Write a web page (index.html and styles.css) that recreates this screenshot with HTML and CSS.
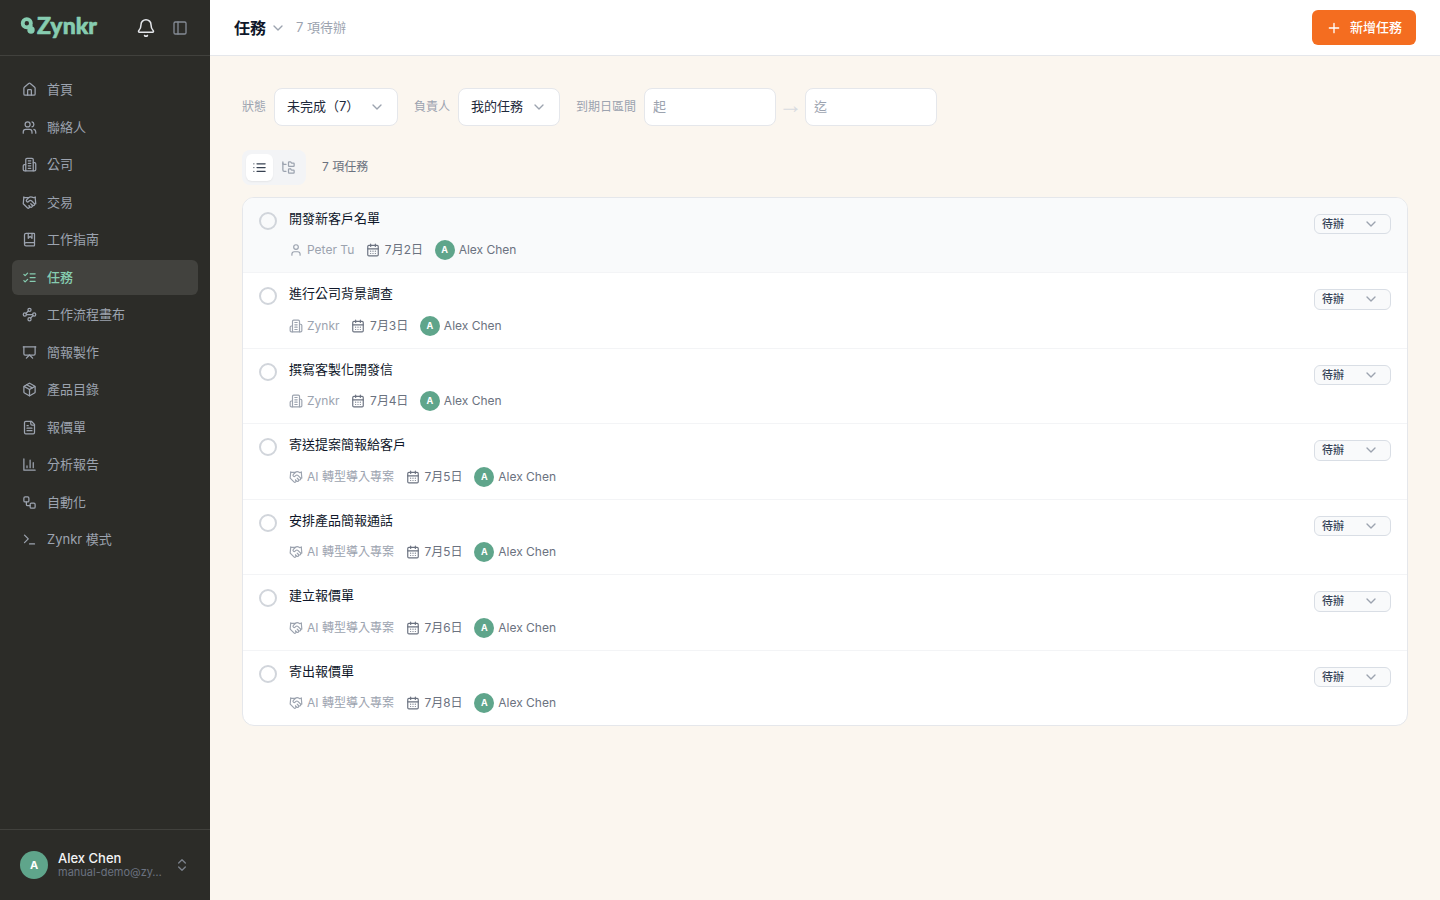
FILE: index.html
```html
<!DOCTYPE html>
<html lang="zh-Hant">
<head>
<meta charset="UTF-8">
<meta name="viewport" content="width=device-width, initial-scale=1.0">
<title>任務 - Zynkr</title>
<link rel="stylesheet" href="styles.css">
</head>
<body>
    <!-- Icons -->
    <svg class="sprite" xmlns="http://www.w3.org/2000/svg">
        <symbol id="home" viewBox="0 0 24 24"><path d="M15 21v-8a1 1 0 0 0-1-1h-4a1 1 0 0 0-1 1v8"/><path d="M3 10a2 2 0 0 1 .709-1.528l7-5.999a2 2 0 0 1 2.582 0l7 5.999A2 2 0 0 1 21 10v9a2 2 0 0 1-2 2H5a2 2 0 0 1-2-2z"/></symbol>
        <symbol id="users" viewBox="0 0 24 24"><path d="M16 21v-2a4 4 0 0 0-4-4H6a4 4 0 0 0-4 4v2"/><circle cx="9" cy="7" r="4"/><path d="M22 21v-2a4 4 0 0 0-3-3.87"/><path d="M16 3.13a4 4 0 0 1 0 7.75"/></symbol>
        <symbol id="building" viewBox="0 0 24 24"><path d="M6 22V4a2 2 0 0 1 2-2h8a2 2 0 0 1 2 2v18Z"/><path d="M6 12H4a2 2 0 0 0-2 2v6a2 2 0 0 0 2 2h2"/><path d="M18 9h2a2 2 0 0 1 2 2v9a2 2 0 0 1-2 2h-2"/><path d="M10 6h4M10 10h4M10 14h4M10 18h4"/></symbol>
        <symbol id="handshake" viewBox="0 0 24 24"><path d="m11 17 2 2a1 1 0 1 0 3-3"/><path d="m14 14 2.5 2.5a1 1 0 1 0 3-3l-3.88-3.88a3 3 0 0 0-4.24 0l-.88.88a1 1 0 1 1-3-3l2.81-2.81a5.79 5.79 0 0 1 7.06-.87l.47.28a2 2 0 0 0 1.42.25L21 4"/><path d="m21 3 1 11h-2"/><path d="M3 3 2 14l6.5 6.5a1 1 0 1 0 3-3"/><path d="M3 4h8"/></symbol>
        <symbol id="book" viewBox="0 0 24 24"><path d="M10 2v8l3-3 3 3V2"/><path d="M4 19.5v-15A2.5 2.5 0 0 1 6.5 2H19a1 1 0 0 1 1 1v18a1 1 0 0 1-1 1H6.5a1 1 0 0 1 0-5H20"/></symbol>
        <symbol id="checks" viewBox="0 0 24 24"><path d="m3 17 2 2 4-4"/><path d="m3 7 2 2 4-4"/><path d="M13 6h8M13 12h8M13 18h8"/></symbol>
        <symbol id="waypoints" viewBox="0 0 24 24"><circle cx="12" cy="4.5" r="2.5"/><path d="m10.2 6.3-3.9 3.9"/><circle cx="4.5" cy="12" r="2.5"/><path d="M7 12h10"/><circle cx="19.5" cy="12" r="2.5"/><path d="m13.8 17.7 3.9-3.9"/><circle cx="12" cy="19.5" r="2.5"/></symbol>
        <symbol id="presentation" viewBox="0 0 24 24"><path d="M2 3h20"/><path d="M21 3v11a2 2 0 0 1-2 2H5a2 2 0 0 1-2-2V3"/><path d="m7 21 5-5 5 5"/></symbol>
        <symbol id="package" viewBox="0 0 24 24"><path d="m7.5 4.27 9 5.15"/><path d="M21 8a2 2 0 0 0-1-1.73l-7-4a2 2 0 0 0-2 0l-7 4A2 2 0 0 0 3 8v8a2 2 0 0 0 1 1.73l7 4a2 2 0 0 0 2 0l7-4A2 2 0 0 0 21 16Z"/><path d="m3.3 7 8.7 5 8.7-5"/><path d="M12 22V12"/></symbol>
        <symbol id="file" viewBox="0 0 24 24"><path d="M15 2H6a2 2 0 0 0-2 2v16a2 2 0 0 0 2 2h12a2 2 0 0 0 2-2V7Z"/><path d="M14 2v4a2 2 0 0 0 2 2h4"/><path d="M10 9H8M16 13H8M16 17H8"/></symbol>
        <symbol id="chart" viewBox="0 0 24 24"><path d="M3 3v18h18"/><path d="M18 17V9M13 17V5M8 17v-3"/></symbol>
        <symbol id="workflow" viewBox="0 0 24 24"><rect width="8" height="8" x="3" y="3" rx="2"/><path d="M7 11v4a2 2 0 0 0 2 2h4"/><rect width="8" height="8" x="13" y="13" rx="2"/></symbol>
        <symbol id="terminal" viewBox="0 0 24 24"><path d="m4 17 6-6-6-6"/><path d="M12 19h8"/></symbol>
        <symbol id="bell" viewBox="0 0 24 24"><path d="M10.268 21a2 2 0 0 0 3.464 0"/><path d="M3.262 15.326A1 1 0 0 0 4 17h16a1 1 0 0 0 .74-1.673C19.41 13.956 18 12.499 18 8A6 6 0 0 0 6 8c0 4.499-1.411 5.956-2.738 7.326"/></symbol>
        <symbol id="panel" viewBox="0 0 24 24"><rect width="18" height="18" x="3" y="3" rx="2"/><path d="M9 3v18"/></symbol>
        <symbol id="down" viewBox="0 0 24 24"><path d="m6 9 6 6 6-6"/></symbol>
        <symbol id="updown" viewBox="0 0 24 24"><path d="m7 15 5 5 5-5"/><path d="m7 9 5-5 5 5"/></symbol>
        <symbol id="plus" viewBox="0 0 24 24"><path d="M5 12h14M12 5v14"/></symbol>
        <symbol id="list" viewBox="0 0 24 24"><path d="M3 6h.01M3 12h.01M3 18h.01M8 6h13M8 12h13M8 18h13"/></symbol>
        <symbol id="tree" viewBox="0 0 24 24"><path d="M20 10a1 1 0 0 0 1-1V6a1 1 0 0 0-1-1h-2.5a1 1 0 0 1-.8-.4l-.9-1.2A1 1 0 0 0 15 3h-2a1 1 0 0 0-1 1v5a1 1 0 0 0 1 1Z"/><path d="M20 21a1 1 0 0 0 1-1v-3a1 1 0 0 0-1-1h-2.9a1 1 0 0 1-.88-.55l-.42-.85a1 1 0 0 0-.92-.6H13a1 1 0 0 0-1 1v5a1 1 0 0 0 1 1Z"/><path d="M3 5a2 2 0 0 0 2 2h3"/><path d="M3 3v13a2 2 0 0 0 2 2h3"/></symbol>
        <symbol id="user" viewBox="0 0 24 24"><path d="M19 21v-2a4 4 0 0 0-4-4H9a4 4 0 0 0-4 4v2"/><circle cx="12" cy="7" r="4"/></symbol>
        <symbol id="calendar" viewBox="0 0 24 24"><path d="M8 2v4M16 2v4"/><rect width="18" height="18" x="3" y="4" rx="2"/><path d="M3 10h18"/><path d="M8 14h.01M12 14h.01M16 14h.01M8 18h.01M12 18h.01M16 18h.01"/></symbol>
    </svg>

    <div class="app">
        <!-- Sidebar -->
        <aside class="sidebar">
            <div class="brand">
                <svg class="logo" viewBox="0 0 84 36">
                    <circle cx="6.8" cy="13.2" r="4.1"/>
                    <path d="M10.5 15v5"/>
                    <circle class="dot" cx="11" cy="20" r="3.7"/>
                    <text x="17" y="23.7" textLength="60" lengthAdjust="spacingAndGlyphs">Zynkr</text>
                </svg>
                <svg class="icon bell"><use href="#bell"/></svg>
                <svg class="icon panel"><use href="#panel"/></svg>
            </div>
            <nav class="nav">
                <a class="nav-item"><svg class="icon"><use href="#home"/></svg><span>首頁</span></a>
                <a class="nav-item"><svg class="icon"><use href="#users"/></svg><span>聯絡人</span></a>
                <a class="nav-item"><svg class="icon"><use href="#building"/></svg><span>公司</span></a>
                <a class="nav-item"><svg class="icon"><use href="#handshake"/></svg><span>交易</span></a>
                <a class="nav-item"><svg class="icon"><use href="#book"/></svg><span>工作指南</span></a>
                <a class="nav-item active"><svg class="icon"><use href="#checks"/></svg><span>任務</span></a>
                <a class="nav-item"><svg class="icon"><use href="#waypoints"/></svg><span>工作流程畫布</span></a>
                <a class="nav-item"><svg class="icon"><use href="#presentation"/></svg><span>簡報製作</span></a>
                <a class="nav-item"><svg class="icon"><use href="#package"/></svg><span>產品目錄</span></a>
                <a class="nav-item"><svg class="icon"><use href="#file"/></svg><span>報價單</span></a>
                <a class="nav-item"><svg class="icon"><use href="#chart"/></svg><span>分析報告</span></a>
                <a class="nav-item"><svg class="icon"><use href="#workflow"/></svg><span>自動化</span></a>
                <a class="nav-item"><svg class="icon"><use href="#terminal"/></svg><span>Zynkr 模式</span></a>
            </nav>
            <div class="account">
                <span class="avatar avatar-lg">A</span>
                <div class="account-info">
                    <div class="account-name">Alex Chen</div>
                    <div class="account-mail">manual-demo@zy…</div>
                </div>
                <svg class="icon"><use href="#updown"/></svg>
            </div>
        </aside>

        <div class="main">
            <!-- Top bar -->
            <header class="topbar">
                <h1>任務</h1>
                <svg class="icon"><use href="#down"/></svg>
                <span class="pending">7 項待辦</span>
                <button class="add"><svg class="icon"><use href="#plus"/></svg>新增任務</button>
            </header>

            <main class="content">
                <!-- Filters -->
                <div class="filters">
                    <div class="filter">
                        <label>狀態</label>
                        <div class="select select-status"><span>未完成（7）</span><svg class="icon"><use href="#down"/></svg></div>
                    </div>
                    <div class="filter">
                        <label>負責人</label>
                        <div class="select select-owner"><span>我的任務</span><svg class="icon"><use href="#down"/></svg></div>
                    </div>
                    <div class="filter">
                        <label>到期日區間</label>
                        <div class="range">
                            <input type="text" placeholder="起">
                            <span class="arrow">→</span>
                            <input type="text" placeholder="迄">
                        </div>
                    </div>
                </div>

                <!-- View switch -->
                <div class="views">
                    <div class="toggle">
                        <span class="toggle-btn on"><svg class="icon"><use href="#list"/></svg></span>
                        <span class="toggle-btn"><svg class="icon"><use href="#tree"/></svg></span>
                    </div>
                    <span class="count">7 項任務</span>
                </div>

                <!-- Task list -->
                <div class="tasks" id="tasks"></div>
            </main>
        </div>
    </div>

    <script>
        const tasks = [
            { title: '開發新客戶名單', icon: 'user', link: 'Peter Tu', date: '7月2日' },
            { title: '進行公司背景調查', icon: 'building', link: 'Zynkr', date: '7月3日' },
            { title: '撰寫客製化開發信', icon: 'building', link: 'Zynkr', date: '7月4日' },
            { title: '寄送提案簡報給客戶', icon: 'handshake', link: 'AI 轉型導入專案', date: '7月5日' },
            { title: '安排產品簡報通話', icon: 'handshake', link: 'AI 轉型導入專案', date: '7月5日' },
            { title: '建立報價單', icon: 'handshake', link: 'AI 轉型導入專案', date: '7月6日' },
            { title: '寄出報價單', icon: 'handshake', link: 'AI 轉型導入專案', date: '7月8日' }
        ];

        document.getElementById('tasks').innerHTML = tasks.map((task, i) => `
            <div class="task ${i === 0 ? 'selected' : ''}">
                <span class="check"></span>
                <div class="task-body">
                    <div class="task-title">${task.title}</div>
                    <div class="meta">
                        <span class="meta-item link"><svg class="icon"><use href="#${task.icon}"/></svg>${task.link}</span>
                        <span class="meta-item date"><svg class="icon"><use href="#calendar"/></svg>${task.date}</span>
                        <span class="meta-item"><span class="avatar">A</span>Alex Chen</span>
                    </div>
                </div>
                <div class="status"><span>待辦</span><svg class="icon"><use href="#down"/></svg></div>
            </div>`).join('');
    </script>
</body>
</html>
```
FILE: styles.css
```css
* {
    box-sizing: border-box;
}
body {
    margin: 0;
    font-family: Inter, "Noto Sans CJK TC", sans-serif;
    font-size: 13px;
    line-height: 1.5;
    color: #0f172a;
}
.sprite {
    display: none;
}
.icon {
    width: 14px;
    height: 14px;
    flex-shrink: 0;
    fill: none;
    stroke: currentColor;
    stroke-width: 2;
    stroke-linecap: round;
    stroke-linejoin: round;
}
.app {
    display: flex;
    height: 100vh;
}

/* Sidebar */
.sidebar {
    width: 210px;
    flex-shrink: 0;
    display: flex;
    flex-direction: column;
    background: #2c2c28;
    color: #9ca3af;
}
.brand {
    height: 56px;
    padding: 0 22px 0 20px;
    display: flex;
    align-items: center;
    border-bottom: 1px solid #41413d;
}
.logo {
    width: 84px;
    height: 36px;
    margin: 1px auto 0 0;
    fill: none;
    stroke: #86ccb0;
    stroke-width: 3.8;
}
.logo .dot {
    fill: #86ccb0;
    stroke: none;
}
.logo text {
    font-family: Lato, sans-serif;
    font-size: 22.5px;
    font-weight: 900;
    fill: #86ccb0;
    stroke-width: 0.6;
    stroke-linejoin: round;
}
.brand .bell {
    width: 20px;
    height: 20px;
    margin-right: 16px;
    color: #e5e7eb;
    stroke-width: 1.8;
}
.brand .panel {
    width: 16px;
    height: 16px;
    color: #848a94;
}
.nav {
    flex: 1;
    padding: 16px 12px;
    display: flex;
    flex-direction: column;
    gap: 2px;
}
.nav-item {
    height: 35.5px;
    padding: 0 10px;
    display: flex;
    align-items: center;
    gap: 10px;
    border-radius: 6px;
}
.nav-item .icon {
    width: 15px;
    height: 15px;
}
.nav-item.active {
    background: #42423e;
    color: #86ccb0;
    font-weight: 500;
}
.account {
    height: 71px;
    padding: 0 20px;
    display: flex;
    align-items: center;
    gap: 10px;
    border-top: 1px solid #41413d;
}
.account-info {
    width: 106px;
}
.account-name {
    color: #f3f4f6;
    font-weight: 500;
    line-height: 15px;
}
.account-mail {
    font-size: 11px;
    line-height: 13px;
    color: #6b7280;
    white-space: nowrap;
}
.account .icon {
    width: 16px;
    height: 16px;
    color: #7b818b;
}
.avatar {
    width: 20px;
    height: 20px;
    display: inline-flex;
    align-items: center;
    justify-content: center;
    flex-shrink: 0;
    border-radius: 50%;
    background: #5fa58b;
    color: #fff;
    font-size: 9px;
    font-weight: 700;
}
.avatar-lg {
    width: 28px;
    height: 28px;
    font-size: 11px;
}

/* Top bar */
.main {
    flex: 1;
    display: flex;
    flex-direction: column;
    background: #fbf6ef;
}
.topbar {
    height: 56px;
    padding: 0 24px;
    display: flex;
    align-items: center;
    background: #fff;
    border-bottom: 1px solid #e5e7eb;
}
.topbar h1 {
    margin: 0 4px 0 0;
    font-size: 16px;
    font-weight: 700;
}
.topbar .icon {
    width: 16px;
    height: 16px;
    color: #9ca3af;
}
.pending {
    margin-left: 10px;
    color: #9ca3af;
}
.add {
    width: 104px;
    height: 35px;
    margin-left: auto;
    padding: 0;
    display: flex;
    align-items: center;
    justify-content: center;
    gap: 8px;
    border: none;
    border-radius: 6px;
    background: #f46d20;
    color: #fff;
    font: inherit;
    font-weight: 500;
}
.topbar .add .icon {
    color: #fff;
}

/* Filters */
.content {
    padding: 32px;
}
.filters {
    display: flex;
    gap: 16px;
}
.filter {
    display: flex;
    align-items: center;
    gap: 8px;
}
.filter label {
    font-size: 12px;
    color: #9ca3af;
}
.select {
    height: 38px;
    padding: 0 12px;
    display: flex;
    align-items: center;
    justify-content: space-between;
    border: 1px solid #e5e7eb;
    border-radius: 8px;
    background: #fff;
    color: #1e293b;
}
.select .icon {
    width: 16px;
    height: 16px;
    color: #9ca3af;
}
.select-status {
    width: 124px;
}
.select-owner {
    width: 102px;
}
.range {
    display: flex;
    align-items: center;
}
.range input {
    width: 132px;
    height: 38px;
    padding: 0 8px 2px;
    border: 1px solid #e5e7eb;
    border-radius: 8px;
    background: #fff;
    font: inherit;
}
.range input::placeholder {
    color: #9ca3af;
}
.arrow {
    width: 29px;
    padding-bottom: 5px;
    display: flex;
    justify-content: center;
    font-family: "Liberation Serif", serif;
    font-size: 24px;
    line-height: 18px;
    color: #d8dbe0;
}

/* View switch */
.views {
    margin: 23.5px 0 12px;
    display: flex;
    align-items: center;
    gap: 16px;
}
.toggle {
    padding: 4px;
    display: flex;
    gap: 2px;
    border-radius: 8px;
    background: #f3f4f6;
}
.toggle-btn {
    width: 27px;
    height: 27px;
    display: flex;
    align-items: center;
    justify-content: center;
    border-radius: 6px;
    color: #9ca3af;
}
.toggle-btn .icon {
    width: 15px;
    height: 15px;
}
.toggle-btn.on {
    background: #fff;
    color: #374151;
    box-shadow: 0 1px 2px rgba(0, 0, 0, 0.06);
}
.count {
    font-size: 12px;
    color: #6b7280;
}

/* Task list */
.tasks {
    border: 1px solid #e5e7eb;
    border-radius: 12px;
    background: #fff;
    overflow: hidden;
}
.task {
    height: 75.5px;
    padding: 10px 16px 0;
    display: flex;
    align-items: flex-start;
    gap: 12px;
    border-bottom: 1px solid #f3f4f6;
}
.task:last-child {
    height: 74.5px;
    border-bottom: none;
}
.task.selected {
    background: #f9fafb;
}
.check {
    width: 18px;
    height: 18px;
    margin-top: 4px;
    flex-shrink: 0;
    border: 2px solid #d1d5db;
    border-radius: 50%;
}
.task-body {
    flex: 1;
    padding-top: 1px;
}
.task-title {
    height: 31.5px;
}
.meta {
    display: flex;
    gap: 12px;
    font-size: 12px;
    color: #6b7280;
}
.meta-item {
    height: 20px;
    display: flex;
    align-items: center;
    gap: 4px;
}
.meta-item.link {
    color: #9ca3af;
}
.meta-item.date {
    font-variant-numeric: tabular-nums;
    letter-spacing: -0.3px;
}
.status {
    width: 77px;
    height: 20.5px;
    margin-top: 6px;
    padding: 0 11px 0 7px;
    display: flex;
    align-items: center;
    justify-content: space-between;
    border: 1px solid #d9dee5;
    border-radius: 6px;
    background: #f9fafb;
    color: #334155;
    font-size: 11px;
    font-weight: 500;
}
.status .icon {
    width: 16px;
    height: 16px;
    color: #9ca3af;
}
```
